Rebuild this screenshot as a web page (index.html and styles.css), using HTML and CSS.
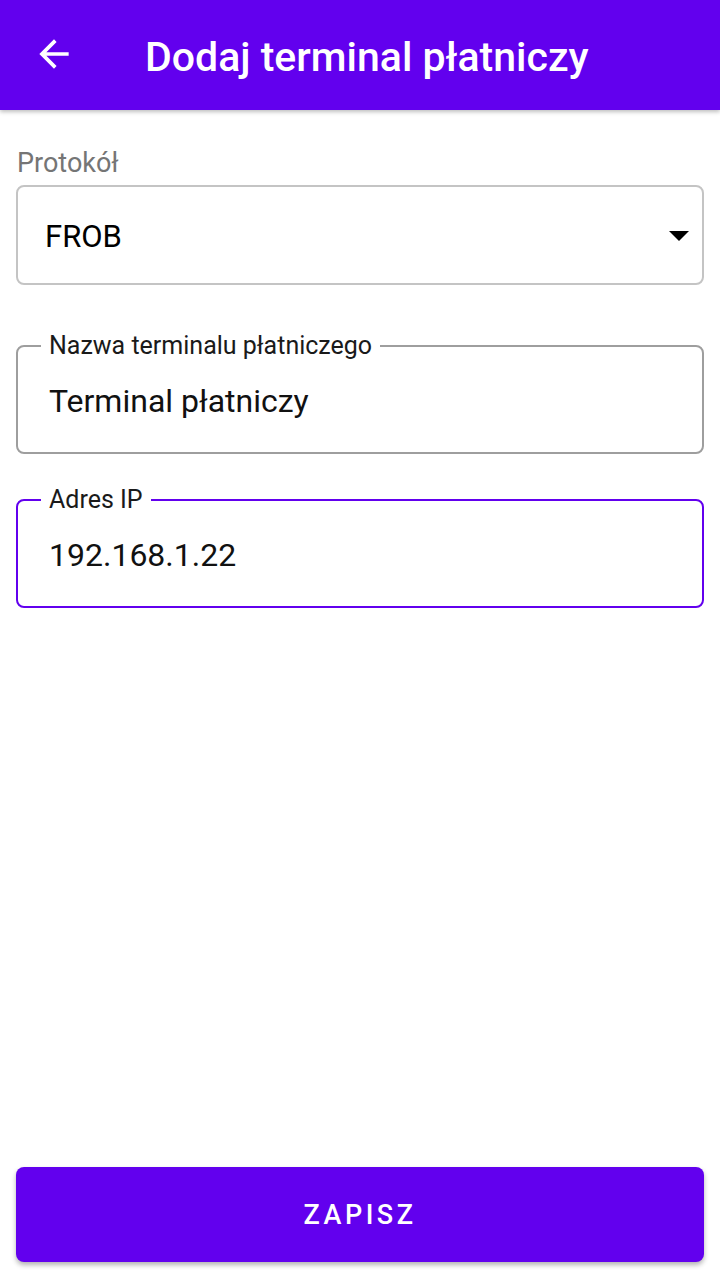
FILE: index.html
```html
<html>
<head>
<meta charset="utf-8">
<link rel="stylesheet" href="styles.css">
</head>
<body>
  <div class="appbar">
    <div class="back">
      <svg width="44" height="44" viewBox="0 0 24 24"><path d="M20 11H7.83l5.59-5.59L12 4l-8 8 8 8 1.41-1.41L7.83 13H20v-2z" fill="#fff"/></svg>
    </div>
    <div class="title">Dodaj terminal płatniczy</div>
  </div>

  <div class="page">
    <div class="form">
      <div class="selLabel">Protokół</div>
      <div class="select">
        <span>FROB</span>
        <span class="caret"></span>
      </div>

      <fieldset class="field">
        <legend>Nazwa terminalu płatniczego</legend>
        <div class="value">Terminal płatniczy</div>
      </fieldset>

      <fieldset class="field focused">
        <legend>Adres IP</legend>
        <div class="value">192.168.1.22</div>
      </fieldset>
    </div>

    <div class="save">ZAPISZ</div>
  </div>
</body>
</html>
```

FILE: styles.css
```css
body
{
    margin: 0;
    font-family: Roboto, "Noto Sans", sans-serif;
    background: #fff;
}

.appbar
{
    height: 110px;
    background: #6200ee;
    display: flex;
    align-items: center;
    box-shadow: 0 2px 4px rgba(0,0,0,.25);
}
.back
{
    width: 145px;
    padding-left: 32px;
    box-sizing: border-box;
    display: flex;
    align-items: center;
    margin-top: -2px;
}
.title
{
    color: #fff;
    font-size: 41px;
    font-weight: 500;
    margin-top: 4px;
}

.page
{
    height: 1175px;
    padding: 0 16px;
    display: flex;
    flex-direction: column;
    justify-content: space-between;
}

.selLabel
{
    margin-top: 37px;
    font-size: 27px;
    color: #757575;
    padding-left: 1px;
}
.select
{
    margin-top: 6px;
    height: 94px;
    border: 2px solid #c4c4c4;
    border-radius: 8px;
    display: flex;
    align-items: center;
    justify-content: space-between;
    padding: 2px 13px 0 27px;
    font-size: 31px;
    color: #000;
}
.caret
{
    width: 0;
    height: 0;
    border-left: 10px solid transparent;
    border-right: 10px solid transparent;
    border-top: 10px solid #000;
}

.field
{
    margin: 46px 0 0 0;
    border: 2px solid #9e9e9e;
    border-radius: 8px;
    padding: 0 31px 0 31px;
    height: 123px;
    box-sizing: border-box;
}
.field legend
{
    font-size: 25px;
    color: #1a1a1a;
    padding: 0 8px;
    margin-left: -8px;
}
.field .value
{
    font-size: 32px;
    color: #111;
    margin-top: 22px;
}
.focused
{
    border-color: #6200ee;
    margin-top: 31px;
}

.save
{
    margin-bottom: 23px;
    height: 95px;
    background: #6200ee;
    border-radius: 8px;
    color: #fff;
    font-size: 27px;
    font-weight: 500;
    letter-spacing: 3.5px;
    display: flex;
    align-items: center;
    justify-content: center;
    box-shadow: 0 3px 5px rgba(0,0,0,.3);
}
```
